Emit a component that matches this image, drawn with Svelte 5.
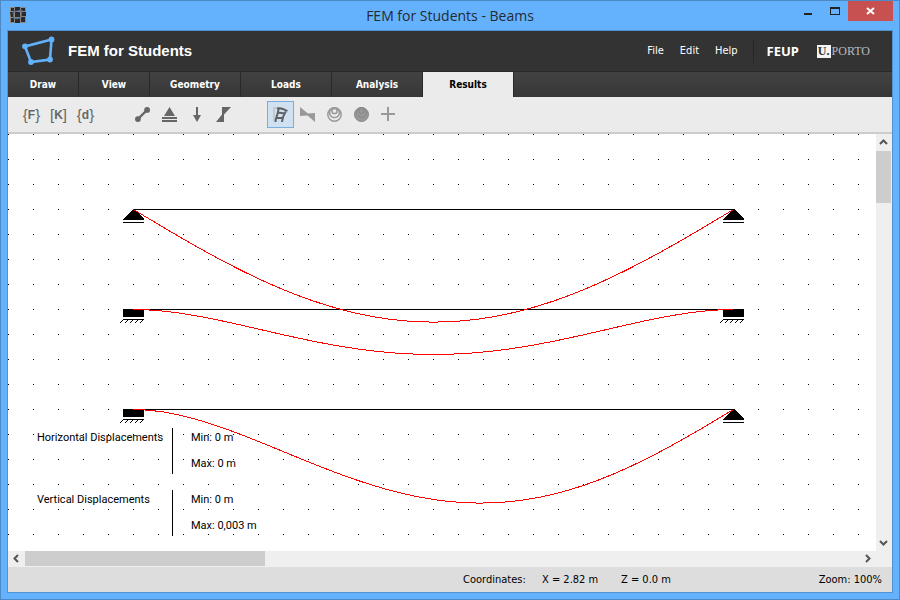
<script>
  const tabs = [
    { name: 'Draw' },
    { name: 'View' },
    { name: 'Geometry', wide: true },
    { name: 'Loads', wide: true },
    { name: 'Analysis', wide: true },
    { name: 'Results', wide: true }
  ];
  let active = $state('Results');

  const left = 125;
  const span = 600;
  const steps = 40;

  // Normalised deflection shapes for a uniform load
  const shapes = {
    pinned: (t) => 3.2 * (t - 2 * t ** 3 + t ** 4),
    fixed: (t) => 16 * t ** 2 * (1 - t) ** 2,
    propped: (t) => (t ** 2 * (1 - t) * (3 - 2 * t)) / 0.26
  };

  const beams = [
    { y: 75, start: 'pin', end: 'pin', shape: 'pinned', depth: 112.6 },
    { y: 175, start: 'fix', end: 'fix', shape: 'fixed', depth: 45 },
    { y: 275, start: 'fix', end: 'pin', shape: 'propped', depth: 93.6 }
  ];

  function curve(beam) {
    const points = [];
    for (let i = 0; i <= steps; i++) {
      const t = i / steps;
      const y = beam.y + beam.depth * shapes[beam.shape](t) + 0.5;
      points.push(`${left + t * span + 0.5},${y.toFixed(2)}`);
    }
    return points.join(' ');
  }

  const results = [
    { label: 'Horizontal Displacements', min: '0 m', max: '0 m' },
    { label: 'Vertical Displacements', min: '0 m', max: '0,003 m' }
  ];
</script>

{#snippet support(kind, x, y)}
  <g transform="translate({x} {y})">
    {#if kind === 'pin'}
      <path d="M0 0H1L11 10V11H-10V10Z" />
      <path d="M-10 13H11V14H-10Z" />
    {:else}
      <path d="M-10 0H11V8H-10ZM-10 10H11V11H-10Z" />
      <path class="hatch" d="M-9.500 10.500l-3.400 3.400M-4.500 10.500l-3.400 3.400M.5 10.500l-3.400 3.400M5.500 10.500l-3.400 3.400M10.500 10.500l-3.400 3.400" />
    {/if}
  </g>
{/snippet}

<div class="window">
  <div class="titlebar">
    <svg class="appicon" width="16" height="16" viewBox="0 0 16 16" aria-hidden="true">
      <rect width="16" height="16" fill="#8c8782" />
      <path d="M1 1h3v3H1zM5 0h5v4H5zM11 1h4v3h-4zM0 5h4v5H1zM5 5h5v5H5zM11 5h5v4h-5zM1 11h3v4H1zM5 11h5v5H5zM11 10h4v5h-4z" fill="#282a2e" />
      <path d="M3 5l9-2-1 8-7 1z" fill="none" stroke="#4d7399" />
    </svg>
    <h1>FEM for Students - Beams</h1>
    <div class="controls">
      <button aria-label="Minimize">
        <svg width="11" height="10"><path d="M1 7h8v2H1z" fill="#222" /></svg>
      </button>
      <button aria-label="Maximize">
        <svg width="11" height="10"><path fill-rule="evenodd" d="M0 1h10v8H0zM1 3v5h8V3z" fill="#222" /></svg>
      </button>
      <button class="close" aria-label="Close">
        <svg width="9" height="8"><path d="M1 1l7 6M8 1L1 7" stroke="#fff" stroke-width="2" /></svg>
      </button>
    </div>
  </div>

  <div class="client">
    <header>
      <svg class="logo" width="34" height="32" viewBox="21 35 34 32" aria-hidden="true">
        <path d="M51.500 39.500L25 46.500 31 62l19-2.500z" fill="none" stroke="#62b1fb" stroke-width="2.600" />
        <g fill="#62b1fb">
          <circle cx="51.500" cy="39.500" r="2.900" /><circle cx="25" cy="46.300" r="2.900" />
          <circle cx="31" cy="62" r="2.900" /><circle cx="50" cy="59.500" r="2.900" />
        </g>
      </svg>
      <strong class="brand">FEM for Students</strong>
      <nav class="menu">
        <button>File</button>
        <button>Edit</button>
        <button>Help</button>
      </nav>
      <div class="schools">
        <span class="feup">FEUP</span>
        <span class="uporto"><b>U.</b>PORTO</span>
      </div>
    </header>

    <nav class="tabs">
      {#each tabs as tab}
        <button class:wide={tab.wide} class:active={active === tab.name} onclick={() => (active = tab.name)}>{tab.name}</button>
      {/each}
    </nav>

    <div class="toolbar">
      <div class="group">
        <button class="sym"><i>&#123;</i>F<i>&#125;</i></button>
        <button class="sym"><i>[</i>K<i>]</i></button>
        <button class="sym"><i>&#123;</i>d<i>&#125;</i></button>
      </div>
      <div class="group">
        <button aria-label="Members">
          <svg width="15" height="15"><path d="M3 12l9-9" stroke="#666" stroke-width="2.400" /><circle cx="2.900" cy="12.100" r="2.900" fill="#666" /><circle cx="12.100" cy="2.900" r="2.900" fill="#666" /></svg>
        </button>
        <button aria-label="Supports">
          <svg width="15" height="15"><path d="M7.500 0L13 9H2zM0 10h15v2H0zM0 13h15v2H0z" fill="#666" /></svg>
        </button>
        <button aria-label="Loads">
          <svg width="15" height="15"><path d="M7 0h2v8h3l-4 7-4-7h3z" fill="#666" /></svg>
        </button>
        <button aria-label="Diagrams">
          <svg width="15" height="15"><path d="M6 0h9L8 7.500V15H0l6-7.500z" fill="#666" /></svg>
        </button>
      </div>
      <div class="group">
        <button class="pressed" aria-label="Deformed shape" aria-pressed="true">
          <svg width="15" height="15"><path d="M1 14V1h9" fill="none" stroke="#c5c9cc" stroke-width="2" /><path d="M2.500 15C2.500 11 5 8 5.500 2M9 15c.3-5 1.500-7 3.800-10.500M4 1.500c3-.8 6 0 10.500 2.500M4.500 6c2-.5 4-.2 7 .5M3 11h6.500" fill="none" stroke="#5e6266" stroke-width="2" /></svg>
        </button>
        <button aria-label="Internal forces">
          <svg width="15" height="15"><path d="M0 0l8 6.500 7-.5v9L7.500 8.500 0 9z" fill="#999" /></svg>
        </button>
        <button aria-label="Isolines">
          <svg width="15" height="15" fill="none" stroke="#999" stroke-width="1.500"><circle cx="7.500" cy="7.500" r="6.700" /><circle cx="7.500" cy="5.700" r="4.900" /><circle cx="7.500" cy="4" r="2.600" /></svg>
        </button>
        <button aria-label="Filled contours">
          <svg width="15" height="15" fill="#999" stroke="#868686"><circle cx="7.500" cy="7.500" r="7" /><circle cx="7.500" cy="5.500" r="5" /><circle cx="7.500" cy="4" r="2.600" /></svg>
        </button>
        <button aria-label="Add">
          <svg width="15" height="15"><path d="M6 0h2v6h6v2H8v6H6V8H0V6h6z" fill="#999" /></svg>
        </button>
      </div>
    </div>

    <div class="view">
      <main>
        <svg class="drawing" width="100%" height="100%" shape-rendering="crispEdges" aria-label="Deformed beams">
          <defs>
            <pattern id="grid" width="25" height="25" patternUnits="userSpaceOnUse">
              <rect width="1" height="1" />
            </pattern>
          </defs>
          <rect width="100%" height="100%" fill="url(#grid)" />
          {#each beams as beam}
            <rect x={left} y={beam.y} width={span} height="1" />
            {@render support(beam.start, left, beam.y)}
            {@render support(beam.end, left + span, beam.y)}
          {/each}
          {#each beams as beam}
            <polyline points={curve(beam)} />
          {/each}
        </svg>
        <div class="results">
          {#each results as row}
            <dl>
              <dt>{row.label}</dt>
              <dd><span>Min: {row.min}</span><span>Max: {row.max}</span></dd>
            </dl>
          {/each}
        </div>
      </main>
      <div class="scroll vertical">
        <button aria-label="Scroll up"><svg width="9" height="9"><path d="M1 6l3.500-3.500L8 6" /></svg></button>
        <div class="track"><div class="thumb"></div></div>
        <button aria-label="Scroll down"><svg width="9" height="9"><path d="M1 3l3.500 3.500L8 3" /></svg></button>
      </div>
      <div class="scroll horizontal">
        <button aria-label="Scroll left"><svg width="9" height="9"><path d="M6 1L2.500 4.500 6 8" /></svg></button>
        <div class="track"><div class="thumb"></div></div>
        <button aria-label="Scroll right"><svg width="9" height="9"><path d="M3 1l3.500 3.500L3 8" /></svg></button>
      </div>
    </div>

    <footer>
      <span class="caption">Coordinates:</span>
      <span class="coord">X = 2.82 m</span>
      <span class="coord">Z = 0.0 m</span>
      <span class="zoom">Zoom: 100%</span>
    </footer>
  </div>
</div>

<style>
  :global(body) {
    margin: 0;
  }
  .window,
  .window * {
    box-sizing: border-box;
  }
  .window {
    display: flex;
    flex-direction: column;
    height: 100vh;
    padding: 0 6px 6px;
    border: 1px solid #4c8ac6;
    background: #64b2fd;
    color: #000;
    font: 11px/20px 'DejaVu Sans Condensed', 'Noto Sans', sans-serif;
  }
  button {
    display: flex;
    align-items: center;
    justify-content: center;
    margin: 0;
    padding: 0;
    border: 0;
    background: none;
    color: inherit;
    font: inherit;
  }
  svg {
    display: block;
    flex: none;
  }

  .titlebar {
    display: grid;
    grid-template-columns: 1fr auto 1fr;
    flex: none;
    height: 29px;
  }
  .appicon {
    margin: 6px 3px;
  }
  h1 {
    margin: 0;
    color: #252a30;
    font: 14px/29px 'Open Sans', sans-serif;
  }
  .controls {
    display: flex;
    justify-content: flex-end;
    height: 20px;
  }
  .controls button {
    width: 27px;
    padding-left: 2px;
  }
  .controls .close {
    width: 45px;
    padding-left: 0;
    background: #c75050;
  }

  .client {
    display: flex;
    flex: 1;
    flex-direction: column;
    min-height: 0;
    border: 1px solid #4f93d2;
  }
  header {
    display: flex;
    flex: none;
    align-items: center;
    height: 41px;
    padding: 0 22px 0 13px;
    border-bottom: 1px solid #292929;
    background: #333;
    color: #fff;
  }
  .brand {
    margin-left: 13px;
    font: bold 15px/20px 'Liberation Sans', sans-serif;
  }
  .menu {
    display: flex;
    gap: 16px;
    margin-left: auto;
    padding-right: 15px;
    line-height: 22px;
  }
  .schools {
    display: flex;
    align-items: center;
    height: 24px;
    padding-left: 13px;
    border-left: 1px solid #262626;
  }
  .feup {
    width: 50px;
    font: bold 13px/20px 'Noto Sans', sans-serif;
  }
  .uporto {
    display: flex;
    color: #bbb;
    font: 12px/13px 'Liberation Serif', serif;
  }
  .uporto b {
    width: 14px;
    margin-right: 1px;
    background: #f4f4f4;
    color: #333;
    text-align: center;
  }

  .tabs {
    display: flex;
    flex: none;
    height: 25px;
    background: linear-gradient(#424242, #373737);
  }
  .tabs button {
    width: 71px;
    border-right: 1px solid #292929;
    color: #fff;
    font-size: 10px;
    font-weight: bold;
  }
  .tabs .wide {
    width: 91px;
  }
  .tabs .active {
    background: #ebebeb;
    color: #000;
  }

  .toolbar {
    display: flex;
    flex: none;
    gap: 30px;
    height: 37px;
    padding: 4px 10px;
    border-bottom: 2px solid #ccc;
    background: #ebebeb;
  }
  .group {
    display: flex;
  }
  .group button {
    width: 27px;
    height: 27px;
  }
  .group .pressed {
    border: 1px solid #7aade2;
    background: #d0e1f2;
  }
  .group .sym {
    color: #666;
    font: bold 12px/20px 'Liberation Sans', sans-serif;
  }
  .sym i {
    font: 15px/20px 'Liberation Sans', sans-serif;
  }

  .view {
    display: grid;
    flex: 1;
    grid-template: minmax(0, 1fr) 16px / minmax(0, 1fr) 16px;
    min-height: 0;
    background: #efefef;
  }
  main {
    position: relative;
    overflow: hidden;
    background: #fff;
  }
  polyline {
    fill: none;
    stroke: #f00;
  }
  .hatch {
    fill: none;
    stroke: #000;
  }
  .results {
    position: absolute;
    bottom: 15px;
    left: 29px;
    display: flex;
    flex-direction: column;
    gap: 16px;
    font-family: Roboto, sans-serif;
  }
  dl {
    display: flex;
    margin: 0;
  }
  dt {
    width: 135px;
  }
  dd {
    display: flex;
    flex-direction: column;
    gap: 6px;
    margin: 0;
    padding-left: 18px;
    border-left: 1px solid #000;
  }

  .scroll {
    display: flex;
  }
  .scroll path {
    fill: none;
    stroke: #555;
    stroke-width: 2;
  }
  .vertical {
    flex-direction: column;
  }
  .track {
    flex: 1;
  }
  .thumb {
    background: #cdcdcd;
  }
  .vertical button {
    width: 15px;
    height: 17px;
  }
  .horizontal button {
    width: 17px;
    height: 15px;
  }
  .vertical .thumb {
    width: 15px;
    height: 52px;
  }
  .horizontal .thumb {
    width: 240px;
    height: 15px;
  }

  footer {
    display: flex;
    flex: none;
    align-items: center;
    justify-content: flex-end;
    height: 25px;
    padding-right: 10px;
    background: #ddd;
  }
  .caption,
  .coord {
    width: 79px;
  }
  .zoom {
    width: 182px;
    text-align: right;
  }
</style>
